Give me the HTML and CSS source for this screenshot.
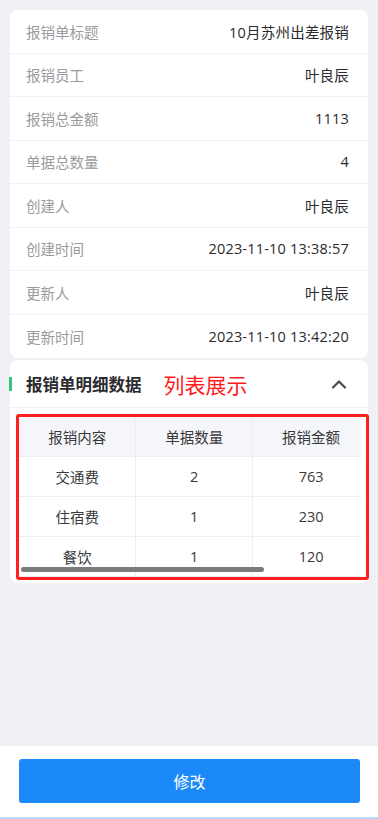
FILE: index.html
```html
<!DOCTYPE html>
<html lang="zh-CN">
<head>
  <meta charset="UTF-8" />
  <meta name="viewport" content="width=device-width, initial-scale=1.0"/>
  <title>报销单详情</title>
  <link rel="stylesheet" href="styles.css">
</head>
<body>

<div class="app">
  <div class="content">

    <div class="card info">
      <div class="cell"><span class="label">报销单标题</span><span class="value">10月苏州出差报销</span></div>
      <div class="cell"><span class="label">报销员工</span><span class="value">叶良辰</span></div>
      <div class="cell"><span class="label">报销总金额</span><span class="value">1113</span></div>
      <div class="cell"><span class="label">单据总数量</span><span class="value">4</span></div>
      <div class="cell"><span class="label">创建人</span><span class="value">叶良辰</span></div>
      <div class="cell"><span class="label">创建时间</span><span class="value">2023-11-10 13:38:57</span></div>
      <div class="cell"><span class="label">更新人</span><span class="value">叶良辰</span></div>
      <div class="cell"><span class="label">更新时间</span><span class="value">2023-11-10 13:42:20</span></div>
    </div>

    <div class="card detail">
      <div class="detail-head">
        <span class="bar"></span>
        <h3>报销单明细数据</h3>
        <span class="note">列表展示</span>
        <svg class="chevron" width="16" height="10" viewBox="0 0 16 10">
          <path d="M2 8.5 L8 2.5 L14 8.5" fill="none" stroke="#4a4a4a" stroke-width="2.2" stroke-linecap="round" stroke-linejoin="round"/>
        </svg>
      </div>

      <div class="detail-body">
        <div class="mark-box">
          <div class="table-wrap">
            <table>
              <thead>
                <tr><th>报销内容</th><th>单据数量</th><th>报销金额</th></tr>
              </thead>
              <tbody>
                <tr><td>交通费</td><td>2</td><td>763</td></tr>
                <tr><td>住宿费</td><td>1</td><td>230</td></tr>
                <tr><td>餐饮</td><td>1</td><td>120</td></tr>
              </tbody>
            </table>
            <div class="scroll-thumb"></div>
          </div>
        </div>
      </div>
    </div>

  </div>

  <footer class="footer">
    <button class="btn-edit">修改</button>
  </footer>
</div>

</body>
</html>
```

FILE: styles.css
```css
body {
  margin: 0;
  font-family: "Noto Sans CJK SC", "Liberation Sans", sans-serif;
  background: #eff1f5;
  color: #323233;
}

.app {
  display: flex;
  flex-direction: column;
  min-height: 100vh;
}

.content {
  flex: 1;
  padding: 10px 10px 0;
}

.card {
  background: #fff;
  border-radius: 8px;
}

/* info list */
.cell {
  display: flex;
  justify-content: space-between;
  align-items: center;
  height: 43.5px;
  box-sizing: border-box;
  padding: 0 19px 0 16px;
  border-bottom: 1px solid #f1f2f5;
  font-size: 14.5px;
}

.cell:last-child {
  border-bottom: none;
}

.label {
  color: #9a9b9e;
}

.value {
  font-family: "Open Sans", "Noto Sans CJK SC", sans-serif;
  letter-spacing: 0.2px;
  color: #2b2b2d;
}

/* detail card */
.detail {
  margin-top: 2px;
  padding-bottom: 3px;
}

.detail-head {
  display: flex;
  align-items: center;
  height: 48px;
  box-sizing: border-box;
  padding: 0 21px 0 0;
  border-bottom: 1px solid #f0f1f4;
}

.bar {
  width: 3px;
  height: 14px;
  background: #35c47a;
  margin-left: -1px;
  margin-right: 14px;
}

.detail-head h3 {
  margin: 0;
  font-size: 16.5px;
  font-weight: bold;
  color: #2b2b2d;
}

.note {
  margin-left: 22px;
  font-size: 21px;
  color: #ff1a1a;
  flex: 1;
}

.detail-body {
  padding: 6px 0 0 6px;
}

.mark-box {
  border: 3px solid #ff1f1f;
  border-radius: 3px;
  margin-right: -1px;
  padding-right: 5px;
}

.table-wrap {
  position: relative;
  overflow: hidden;
}

table {
  border-collapse: collapse;
  width: 351px;
  table-layout: fixed;
  font-family: "Open Sans", "Noto Sans CJK SC", sans-serif;
  font-size: 14.5px;
  color: #3a3a3c;
}

th, td {
  height: 39px;
  padding: 0;
  text-align: center;
  font-weight: normal;
  border-bottom: 1px solid #eceef1;
  border-right: 1px solid #eceef1;
}

th {
  background: #f5f6f9;
}

.scroll-thumb {
  position: absolute;
  left: 2px;
  bottom: 5px;
  width: 243px;
  height: 5px;
  border-radius: 3px;
  background: #7b7b7b;
}

/* footer */
.footer {
  background: #fff;
  padding: 13px 18px 14px 19px;
  border-bottom: 2px solid #b7d8fb;
  margin-top: 163px;
}

.btn-edit {
  display: block;
  width: 100%;
  height: 44px;
  border: none;
  border-radius: 3px;
  background: #1b8af8;
  color: #fff;
  font-family: "Noto Sans CJK SC", sans-serif;
  font-size: 16px;
}
```
